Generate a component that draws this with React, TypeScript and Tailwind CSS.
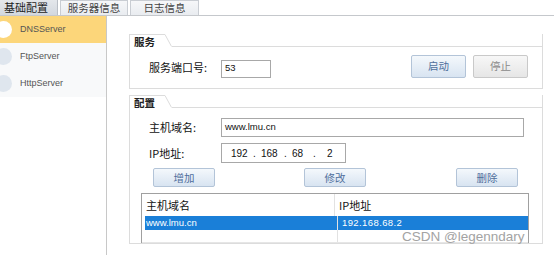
import React from "react";

const cjk = { fontFamily: '"Noto Sans CJK SC", "Noto Sans", sans-serif' };
const lat = { fontFamily: '"Liberation Sans", "Noto Sans CJK SC", sans-serif' };

function GroupBox({ title, titleW, children, bodyClass }: { title: string; titleW: string; children: React.ReactNode; bodyClass: string }) {
  return (
    <div className="flex flex-col w-[414px]">
      <div className="flex h-[13px]">
        <div className={`${titleW} h-[13px] border-t border-l border-[#dcdcdc] bg-white pl-[4px] text-[10.5px] leading-[13px] font-bold text-[#222]`} style={cjk}>
          {title}
        </div>
        <svg width="7" height="13" viewBox="0 0 7 13" className="block">
          <line x1="0" y1="0.5" x2="6.5" y2="12.5" stroke="#dcdcdc" strokeWidth="1" />
        </svg>
        <div className="flex-1 border-b border-r border-[#dcdcdc]" />
      </div>
      <div className={`border-l border-r border-b border-[#dcdcdc] bg-white ${bodyClass}`}>{children}</div>
    </div>
  );
}

function BlueBtn({ label, w, disabled }: { label: string; w: string; disabled?: boolean }) {
  return (
    <div
      className={`${w} flex items-center justify-center rounded-[2px] border text-[10.5px] ${
        disabled
          ? "border-[#c9c9c9] bg-gradient-to-b from-[#f7f7f7] to-[#e6e6e6] text-[#8a8a8a]"
          : "border-[#b3c4d8] bg-gradient-to-b from-[#f4f8fc] to-[#d8e4f1] text-[#4f6e9c]"
      }`}
      style={cjk}
    >
      {label}
    </div>
  );
}

export default function App() {
  const servers = ["DNSServer", "FtpServer", "HttpServer"];
  return (
    <div className="relative w-[554px] h-[255px] overflow-hidden bg-white">
      {/* tabs */}
      <div className="flex h-[16px] gap-[2px] border-b border-[#c5c8cc] bg-white">
        <div className="w-[58px] flex items-center pl-[4px] bg-gradient-to-b from-[#e4e7eb] to-[#d3d8df] border-r border-[#b9bec5] text-[11px] text-[#1e1e1e]" style={cjk}>
          基础配置
        </div>
        <div className="w-[68px] flex items-center justify-center bg-gradient-to-b from-[#f6f7f9] to-[#e9ecf0] border border-b-0 border-[#c9cdd3] text-[10.5px] text-[#444]" style={cjk}>
          服务器信息
        </div>
        <div className="w-[69px] flex items-center justify-center bg-gradient-to-b from-[#f6f7f9] to-[#e9ecf0] border border-b-0 border-[#c9cdd3] text-[10.5px] text-[#444]" style={cjk}>
          日志信息
        </div>
      </div>

      <div className="flex h-[239px]">
        {/* left panel */}
        <div className="w-[107px] border-r border-[#c8c8c8] bg-white flex flex-col">
          <div className="bg-[#f8f9fa] flex flex-col">
            {servers.map((s, i) => (
              <div
                key={s}
                className={`flex items-center h-[27px] ${i === 0 ? "bg-[#fcd67a]" : ""} ${i === 2 ? "h-[26px]" : ""}`}
              >
                <div className={`w-[17px] h-[17px] rounded-full -ml-[5px] ${i === 0 ? "bg-white" : "bg-[#dfe6ee]"}`} />
                <span className="ml-[8px] text-[9px] text-[#555]" style={lat}>
                  {s}
                </span>
              </div>
            ))}
          </div>
        </div>

        {/* main */}
        <div className="flex-1 flex flex-col pl-[22px] pt-[18px] gap-[6px]">
          <GroupBox title="服务" titleW="w-[36px]" bodyClass="h-[42px] flex items-center pl-[19px] pr-[14px]">
            <span className="w-[72px] text-[11px] text-[#111]" style={cjk}>
              服务端口号:
            </span>
            <div className="w-[50px] h-[18px] mt-[2px] border border-[#a8a8a8] flex items-center pl-[3px] text-[9.5px] text-[#111]" style={lat}>
              53
            </div>
            <div className="ml-auto flex gap-[7px] -mt-[3px]">
              <BlueBtn label="启动" w="w-[55px] h-[23px]" />
              <BlueBtn label="停止" w="w-[55px] h-[23px]" disabled />
            </div>
          </GroupBox>

          <GroupBox title="配置" titleW="w-[36px]" bodyClass="flex-1 flex flex-col pt-[10px]">
            <div className="flex items-center h-[19px]">
              <span className="w-[72px] pl-[19px] box-content text-[11px] text-[#111]" style={cjk}>
                主机域名:
              </span>
              <div className="w-[303px] h-[19px] border border-[#a8a8a8] flex items-center pl-[3px] text-[9.5px] text-[#111]" style={lat}>
                www.lmu.cn
              </div>
            </div>
            <div className="flex items-center h-[20px] mt-[6px]">
              <span className="w-[72px] pl-[19px] box-content text-[11px] text-[#111]" style={cjk}>
                IP地址:
              </span>
              <div className="w-[125px] h-[20px] border border-[#a8a8a8] flex items-center text-[10px] text-[#111]" style={lat}>
                <span className="w-[22px] ml-[9px]">192</span>
                <span className="w-[8px]">.</span>
                <span className="w-[23px]">168</span>
                <span className="w-[8px]">.</span>
                <span className="w-[21px]">68</span>
                <span className="w-[14px]">.</span>
                <span>2</span>
              </div>
            </div>
            <div className="flex h-[19px] mt-[5px] pl-[23px]">
              <BlueBtn label="增加" w="w-[62px] h-[19px]" />
              <div className="ml-[89px]">
                <BlueBtn label="修改" w="w-[62px] h-[19px]" />
              </div>
              <div className="ml-[90px]">
                <BlueBtn label="删除" w="w-[62px] h-[19px]" />
              </div>
            </div>
            <div className="ml-[11px] mt-[6px] w-[388px] flex-1 border border-[#a0a0a0] border-b-0 flex flex-col bg-white">
              <div className="flex h-[22px] items-center text-[11px] text-[#111]" style={cjk}>
                <div className="w-[193px] pl-[4px] h-full flex items-center border-r border-[#e2e2e2]">主机域名</div>
                <div className="flex-1 pl-[4px]">IP地址</div>
              </div>
              <div className="flex h-[14px] text-[9.5px] text-white" style={lat}>
                <div className="w-[193px] ml-[3px] bg-[#1a7fd8] flex items-center pl-[1px] border-r border-[#e2e2e2]">www.lmu.cn</div>
                <div className="flex-1 bg-[#1a7fd8] flex items-center pl-[4px] tracking-[0.4px]">192.168.68.2</div>
              </div>
              <div className="flex h-[13px] border-b border-[#e6e6e6]">
                <div className="w-[196px] border-r border-[#e2e2e2]" />
              </div>
              <div className="flex flex-1">
                <div className="w-[196px] border-r border-[#e2e2e2]" />
              </div>
            </div>
          </GroupBox>
        </div>
      </div>

      <div className="absolute left-[402px] top-[229px] text-[13.5px] text-[#a3a3a3] leading-[16px]" style={lat}>
        CSDN @legenndary
      </div>
    </div>
  );
}
